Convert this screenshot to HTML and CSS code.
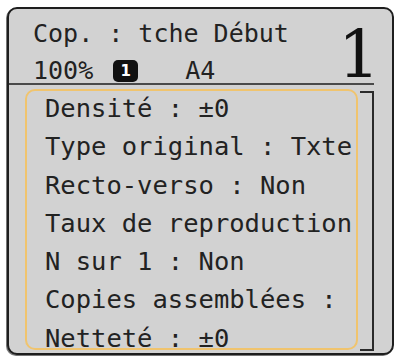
FILE: index.html
```html
<!DOCTYPE html>
<html lang="fr">
<head>
<meta charset="utf-8">
<link rel="stylesheet" href="styles.css">
</head>
<body>
<div class="panel">
  <div class="head">
    <div class="head-left">
      <div class="title">Cop. : tche Début</div>
      <div class="info"><span>100%</span><span class="badge">1</span><span class="paper">A4</span></div>
    </div>
    <div class="count">1</div>
  </div>
  <div class="body">
    <div class="list">
      <ul class="items">
        <li>Densité : ±0</li>
        <li>Type original : Txte</li>
        <li>Recto-verso : Non</li>
        <li>Taux de reproduction</li>
        <li>N sur 1 : Non</li>
        <li>Copies assemblées :</li>
        <li>Netteté : ±0</li>
      </ul>
    </div>
    <div class="track"></div>
  </div>
</div>
</body>
</html>
```
FILE: styles.css
```css
* { box-sizing: border-box; }
html, body { margin: 0; padding: 0; background: #ffffff; }
body { width: 396px; height: 356px; overflow: hidden; }

.panel {
  margin: 7px 0 0 7px;
  width: 387px;
  height: 348px;
  border: 2px solid #1e1e1e;
  border-radius: 10px;
  background: #d2d2d2;
  padding: 0 18px 0 0;
  font-family: "DejaVu Sans Mono", monospace;
  color: #222;
  box-shadow: -1px 1px 0 #777;
}

.head {
  display: flex;
  justify-content: space-between;
  height: 76px;
  padding: 10px 0 0 24px;
  border-bottom: 2px solid #4a4a4a;
}

.title {
  font-size: 25px;
  line-height: 30px;
  white-space: pre;
}

.info {
  margin-top: 9px;
  display: flex;
  align-items: center;
  font-size: 25px;
  line-height: 25px;
}

.badge {
  margin-left: 20px;
  width: 25px;
  height: 22px;
  border-radius: 5px;
  background: #111;
  color: #fff;
  font-family: "DejaVu Sans", sans-serif;
  font-weight: bold;
  font-size: 15px;
  line-height: 22px;
  text-align: center;
}

.paper { margin-left: 47px; }

.count {
  margin-top: 8px;
  margin-right: -6px;
  font-family: "DejaVu Serif", serif;
  font-size: 66px;
  line-height: 56px;
  color: #111;
}

.body {
  display: flex;
  gap: 2px;
  margin: 4px 0 0 16px;
}

.list {
  width: 333px;
  height: 261px;
  border: 2px solid #f0c46e;
  border-radius: 10px;
}

.items {
  list-style: none;
  margin: -2px 0 0 0;
  padding: 0 0 0 18px;
  font-size: 25.5px;
  line-height: 38.3px;
}

.items li { white-space: pre; }

.track {
  width: 14px;
  height: 260px;
  margin-top: 2px;
  border-top: 2px solid #2a2a2a;
  border-right: 2px solid #2a2a2a;
  border-bottom: 2px solid #2a2a2a;
}
```
